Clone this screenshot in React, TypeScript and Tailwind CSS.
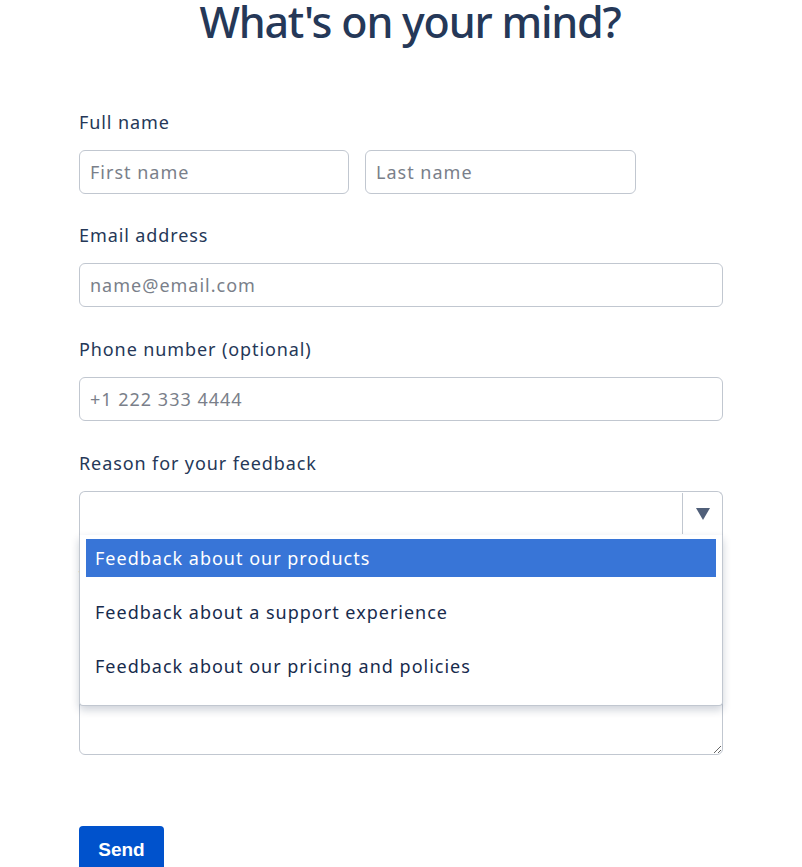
import React from 'react';

const font = { fontFamily: '"Noto Sans", "Open Sans", sans-serif' };

const Label: React.FC<{ children: React.ReactNode }> = ({ children }) => (
  <label className="block text-[18px] leading-[27px] tracking-[0.9px] text-[#253858] mb-[14px]">{children}</label>
);

const inputCls =
  'h-[44px] rounded-[6px] border border-[#c1c7d0] bg-white px-[10px] text-[18px] tracking-[1px] text-[#172b4d] placeholder:text-[#7a7f8a] outline-none';

const OPTIONS = [
  'Feedback about our products',
  'Feedback about a support experience',
  'Feedback about our pricing and policies',
];

export default function App() {
  return (
    <div className="min-h-screen bg-white" style={font}>
      <div className="w-[644px] mx-auto">
        <h1 className="text-center text-[43px] leading-[44px] font-medium text-[#253858] tracking-[-1.2px] mb-[65px] pl-[18px]">
          What's on your mind?
        </h1>

        {/* Full name */}
        <div className="mb-[28px]">
          <Label>Full name</Label>
          <div className="flex gap-[16px]">
            <input className={`${inputCls} w-[270px]`} placeholder="First name" />
            <input className={`${inputCls} w-[271px]`} placeholder="Last name" />
          </div>
        </div>

        {/* Email */}
        <div className="mb-[29px]">
          <Label>Email address</Label>
          <input className={`${inputCls} w-full`} placeholder="name@email.com" />
        </div>

        {/* Phone */}
        <div className="mb-[29px]">
          <Label>Phone number (optional)</Label>
          <input className={`${inputCls} w-full`} placeholder="+1 222 333 4444" />
        </div>

        {/* Reason */}
        <div className="mb-[29px] relative z-10">
          <Label>Reason for your feedback</Label>
          <div className="relative">
            <div className="h-[44px] rounded-t-[6px] border border-b-0 border-[#c1c7d0] bg-white flex justify-end">
              <div className="w-[40px] my-[1px] border-l border-[#c1c7d0] flex items-center justify-center">
                <svg width="14" height="12" viewBox="0 0 14 12">
                  <path d="M0 0 H14 L7 12 Z" fill="#505f79" />
                </svg>
              </div>
            </div>
            <ul className="absolute left-0 right-0 top-[44px] bg-white rounded-b-[4px] border-x border-b border-[#c1c7d0] shadow-[0_4px_8px_rgba(9,30,66,0.2)] px-[6px] pt-[4px] pb-[20px]">
              {OPTIONS.map((o, i) => (
                <li
                  key={o}
                  className={`h-[38px] flex items-center px-[9px] text-[18px] tracking-[1px] ${
                    i === 0 ? 'bg-[#3875d7] text-white' : 'text-[#172b4d]'
                  } ${i < OPTIONS.length - 1 ? 'mb-[16px]' : ''}`}
                >
                  {o}
                </li>
              ))}
            </ul>
          </div>
        </div>

        {/* Message */}
        <div className="mb-[71px]">
          <Label>Tell us more</Label>
          <textarea className="block w-full h-[150px] rounded-[6px] border border-[#c1c7d0] bg-white px-[10px] py-[8px] text-[18px] outline-none" />
        </div>

        <button
          className="h-[48px] w-[85px] rounded-t-[4px] bg-[#0052cc] text-white text-[19px] font-bold"
          style={{ fontFamily: '"Liberation Sans", Arial, sans-serif' }}
        >
          Send
        </button>
      </div>
    </div>
  );
}
